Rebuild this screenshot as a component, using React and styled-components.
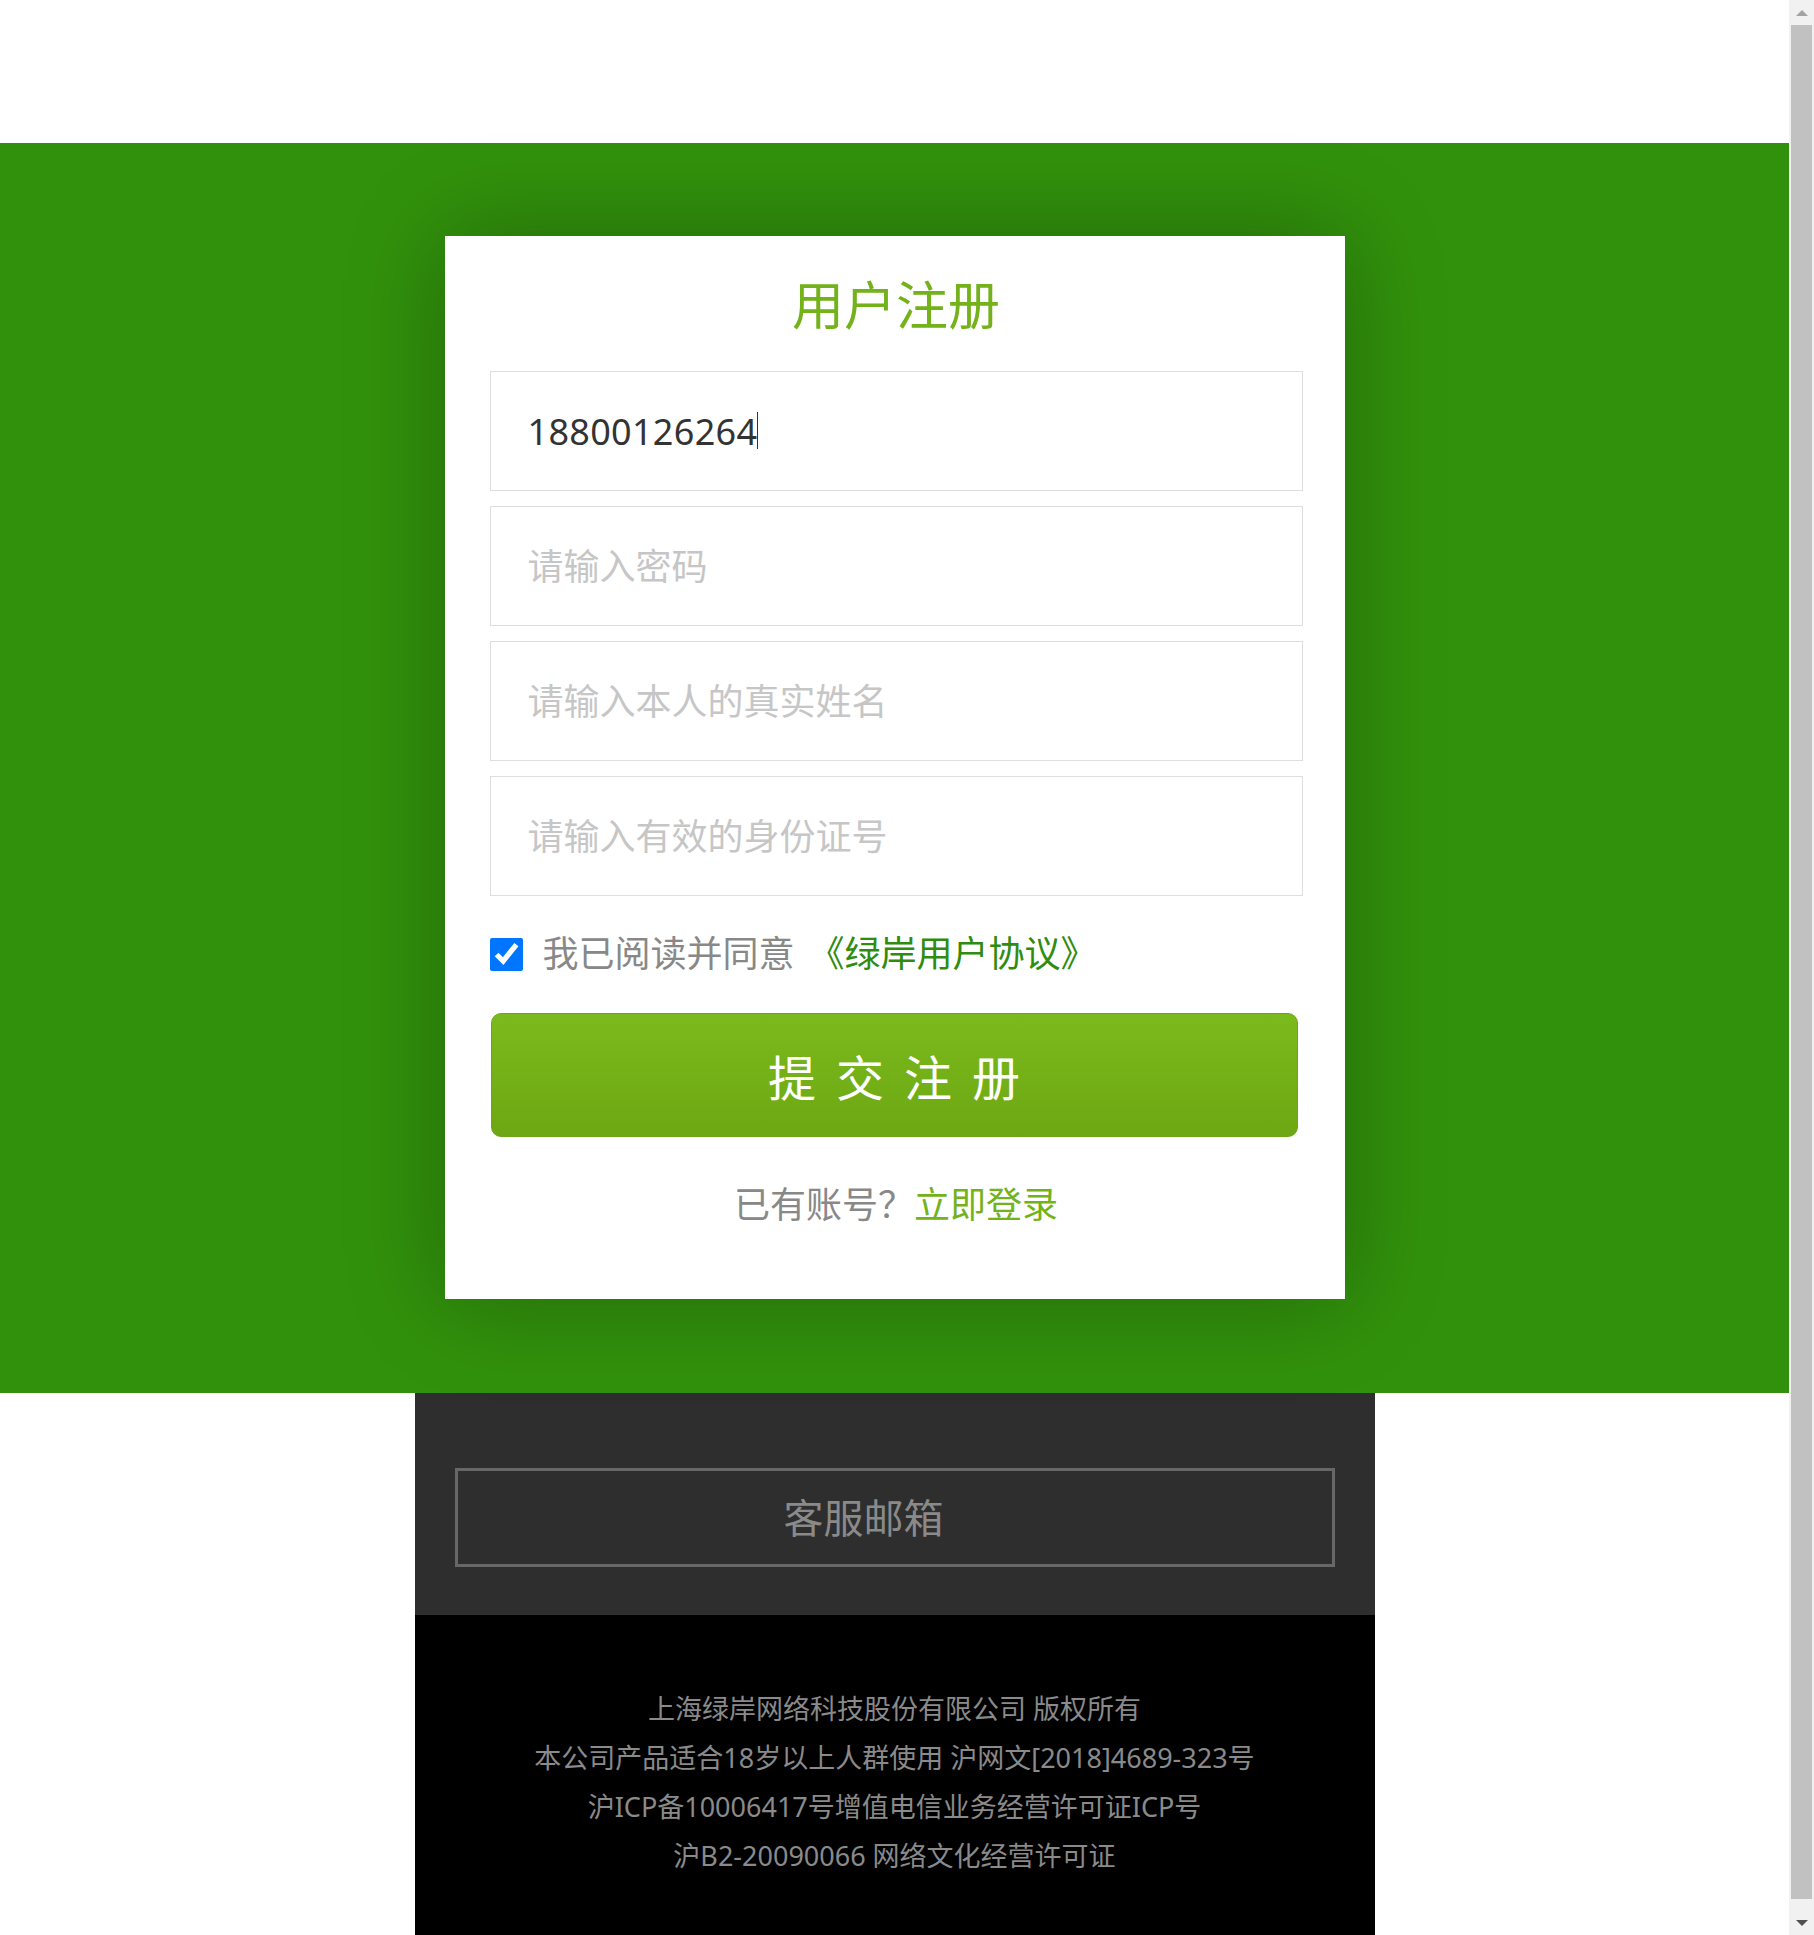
import React from "react";
import styled, { createGlobalStyle } from "styled-components";

const GlobalStyle = createGlobalStyle`
  body {
    margin: 0;
    background: #fff;
    font-family: "Noto Sans", "Noto Sans CJK SC", sans-serif;
  }
`;

const App = () => {
  return (
    <>
      <GlobalStyle />
      <Page>
        <Header />
        <Banner>
          <Card>
            <Title>用户注册</Title>
            <Fields>
              <PhoneField>
                <Input type="text" defaultValue="18800126264" />
                <Caret />
              </PhoneField>
              <Input type="password" placeholder="请输入密码" />
              <Input type="text" placeholder="请输入本人的真实姓名" />
              <Input type="text" placeholder="请输入有效的身份证号" />
            </Fields>
            <Agree>
              <Check type="checkbox" defaultChecked />
              <span>我已阅读并同意</span>
              <Protocol href="#">《绿岸用户协议》</Protocol>
            </Agree>
            <Submit type="button">提交注册</Submit>
            <LoginLine>
              已有账号？<LoginLink href="#">立即登录</LoginLink>
            </LoginLine>
          </Card>
        </Banner>
        <Service>
          <MailBox>客服邮箱</MailBox>
        </Service>
        <Footer>
          <p>上海绿岸网络科技股份有限公司 版权所有</p>
          <p>本公司产品适合18岁以上人群使用 沪网文[2018]4689-323号</p>
          <p>沪ICP备10006417号增值电信业务经营许可证ICP号</p>
          <p>沪B2-20090066 网络文化经营许可证</p>
        </Footer>
      </Page>
      <ScrollBar>
        <Arrow $up />
        <Thumb />
        <Arrow />
      </ScrollBar>
    </>
  );
};

export default App;

const Page = styled.div`
  margin-right: 25px;
`;

const Header = styled.div`
  height: 143px;
  background: #fff;
`;

const Banner = styled.section`
  display: flex;
  justify-content: center;
  padding: 93px 0 94px;
  background: #31910c;
`;

const Card = styled.div`
  box-sizing: border-box;
  width: 900px;
  padding: 43px 42px 76px 45px;
  background: #fff;
  box-shadow: 0 0 90px rgba(0, 0, 0, 0.28);
`;

const Title = styled.h2`
  margin: 0 0 40px;
  font-size: 52px;
  line-height: 52px;
  font-weight: 400;
  text-align: center;
  color: #73b21b;
`;

const Fields = styled.div`
  display: flex;
  flex-direction: column;
  gap: 15px;
`;

const PhoneField = styled.div`
  position: relative;
`;

const Caret = styled.span`
  position: absolute;
  left: 267px;
  top: 41px;
  width: 1px;
  height: 37px;
  background: #333;
`;

const Input = styled.input`
  display: block;
  box-sizing: border-box;
  width: 100%;
  height: 120px;
  padding: 0 37px;
  border: 1px solid #dedede;
  border-radius: 0;
  outline: none;
  font-family: inherit;
  font-size: 36px;
  letter-spacing: 0.3px;
  color: #333;

  &::placeholder {
    color: #c6c6c6;
    letter-spacing: 0;
  }
`;

const Agree = styled.label`
  display: flex;
  align-items: center;
  height: 36px;
  margin-top: 40px;
  font-size: 36px;
  line-height: 36px;
  color: #888;
`;

const Check = styled.input`
  width: 33px;
  height: 33px;
  margin: 0 20px 0 0;
  accent-color: #0075ff;
`;

const Protocol = styled.a`
  margin-left: 14px;
  color: #2f8c0f;
  text-decoration: none;
`;

const Submit = styled.button`
  display: block;
  box-sizing: border-box;
  width: 807px;
  height: 124px;
  margin: 41px 0 0 1px;
  padding: 0 0 0 20px;
  border: 1px solid #6da515;
  border-radius: 10px;
  background: linear-gradient(#7bba1c, #6da713);
  font-family: inherit;
  font-size: 48px;
  letter-spacing: 20px;
  color: #fff;
  cursor: pointer;
`;

const LoginLine = styled.div`
  margin-top: 50px;
  font-size: 36px;
  line-height: 36px;
  text-align: center;
  color: #888;
`;

const LoginLink = styled.a`
  color: #73b21b;
  text-decoration: none;
`;

const Service = styled.section`
  box-sizing: border-box;
  width: 960px;
  margin: 0 auto;
  padding: 75px 40px 48px;
  background: #2e2e2e;
`;

const MailBox = styled.div`
  box-sizing: border-box;
  height: 99px;
  padding-right: 62px;
  border: 3px solid #676767;
  font-size: 40px;
  line-height: 93px;
  text-align: center;
  color: #8a8a8a;
`;

const Footer = styled.footer`
  box-sizing: border-box;
  width: 960px;
  margin: 0 auto;
  padding: 69px 0 68px;
  background: #000;
  text-align: center;

  p {
    margin: 0;
    font-size: 27px;
    line-height: 49px;
    color: #8a8a8a;
  }
`;

/* stand-in for the browser's vertical scrollbar */
const ScrollBar = styled.aside`
  position: fixed;
  top: 0;
  right: 0;
  display: flex;
  flex-direction: column;
  width: 25px;
  height: 100vh;
  background: #f1f1f1;
`;

const Thumb = styled.div`
  flex: 1;
  margin: 0 2px 11px;
  background: #c1c1c1;
`;

const Arrow = styled.div`
  display: flex;
  justify-content: center;
  align-items: center;
  height: 25px;

  &::before {
    content: "";
    border-left: 6px solid transparent;
    border-right: 6px solid transparent;
    ${(props) =>
      props.$up
        ? "border-bottom: 6px solid #a3a3a3;"
        : "border-top: 6px solid #505050;"}
  }
`;
